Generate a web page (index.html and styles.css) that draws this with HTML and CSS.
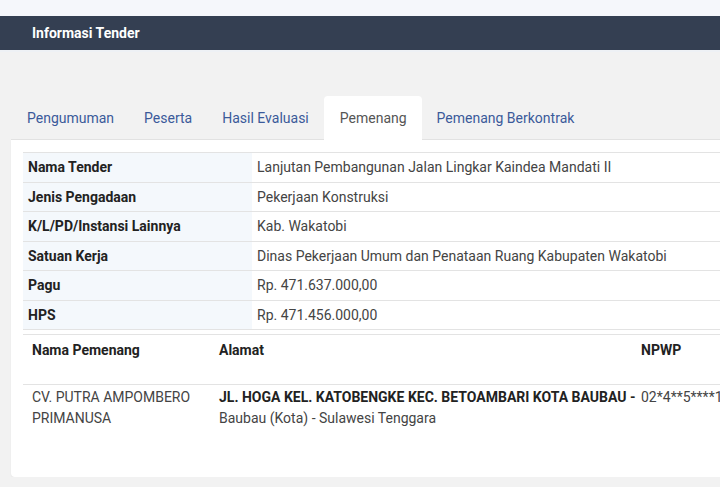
FILE: index.html
```html
<!DOCTYPE html>
<html lang="id">
<head>
    <meta charset="UTF-8">
    <meta name="viewport" content="width=device-width, initial-scale=1.0">
    <title>Informasi Tender</title>
    <link rel="stylesheet" href="styles.css">
</head>
<body>
    <div class="topbar"></div>
    <header class="page-header">Informasi Tender</header>
    <main class="content">
        <ul class="tabs">
            <li class="tab">Pengumuman</li>
            <li class="tab">Peserta</li>
            <li class="tab">Hasil Evaluasi</li>
            <li class="tab active">Pemenang</li>
            <li class="tab">Pemenang Berkontrak</li>
        </ul>
        <div class="card">
            <table class="info">
                <tr><th>Nama Tender</th><td>Lanjutan Pembangunan Jalan Lingkar Kaindea Mandati II</td></tr>
                <tr><th>Jenis Pengadaan</th><td>Pekerjaan Konstruksi</td></tr>
                <tr><th>K/L/PD/Instansi Lainnya</th><td>Kab. Wakatobi</td></tr>
                <tr><th>Satuan Kerja</th><td>Dinas Pekerjaan Umum dan Penataan Ruang Kabupaten Wakatobi</td></tr>
                <tr><th>Pagu</th><td>Rp. 471.637.000,00</td></tr>
                <tr><th>HPS</th><td>Rp. 471.456.000,00</td></tr>
            </table>
            <table class="winner">
                <thead>
                    <tr>
                        <th class="col-name">Nama Pemenang</th>
                        <th class="col-addr">Alamat</th>
                        <th class="col-npwp">NPWP</th>
                    </tr>
                </thead>
                <tbody>
                    <tr>
                        <td class="col-name">CV. PUTRA AMPOMBERO PRIMANUSA</td>
                        <td class="col-addr"><b>JL. HOGA KEL. KATOBENGKE KEC. BETOAMBARI KOTA BAUBAU -</b> Baubau (Kota) - Sulawesi Tenggara</td>
                        <td class="col-npwp">02*4**5****1**0**0</td>
                    </tr>
                </tbody>
            </table>
        </div>
    </main>
</body>
</html>
```

FILE: styles.css
```css
body {
    margin: 0;
    font-family: Roboto, "Liberation Sans", Arial, sans-serif;
    font-size: 14px;
    color: #333;
    background-color: #f2f2f2;
    overflow: hidden;
}

.topbar {
    height: 16px;
    background-color: #f5f7fb;
}

.page-header {
    height: 34px;
    line-height: 34px;
    padding-left: 32px;
    background-color: #343f52;
    color: #fff;
    font-weight: bold;
    font-size: 14px;
    border-bottom: 2px solid #eef1f5;
}

.content {
    padding: 44px 0 0 11px;
    width: 800px;
}

.tabs {
    display: flex;
    list-style: none;
    margin: 0;
    padding: 0 0 0 1px;
    border-bottom: 1px solid #e2e2e2;
}

.tab {
    padding: 13px 15px;
    line-height: 18px;
    color: #3b5a9a;
    border-radius: 4px 4px 0 0;
    margin-bottom: -1px;
}

.tab.active {
    background-color: #fff;
    color: #555;
    padding: 13px 15px 13px 16px;
}

.card {
    background-color: #fff;
    padding: 12px 0 48px 12px;
    border-radius: 0 0 0 4px;
    box-shadow: 0 1px 2px rgba(0, 0, 0, 0.06);
}

table {
    border-collapse: collapse;
    width: 100%;
}

.info {
    border-top: 1px solid #e3e3e3;
}

.info tr {
    border-bottom: 1px solid #e3e3e3;
}

.info th {
    width: 219px;
    text-align: left;
    padding: 5px 5px;
    line-height: 18.5px;
    background-color: #f4f8fc;
    color: #222;
    font-weight: bold;
}

.info td {
    padding: 5px 5px;
    line-height: 18.5px;
    color: #444;
}

.winner {
    margin-top: 4px;
    border-top: 1px solid #e3e3e3;
}

.winner th {
    text-align: left;
    font-weight: bold;
    color: #222;
    padding: 5px 9px 24px 9px;
    line-height: 20px;
    vertical-align: top;
    border-bottom: 1px solid #e3e3e3;
}

.winner td {
    padding: 2px 9px 0 9px;
    line-height: 21px;
    vertical-align: top;
    color: #444;
}

.winner b {
    color: #222;
}

.winner .col-name {
    width: 169px;
}

.winner .col-addr {
    width: 418px;
    padding-right: 0;
}

.winner .col-npwp {
    padding-left: 4px;
    white-space: nowrap;
}
```
